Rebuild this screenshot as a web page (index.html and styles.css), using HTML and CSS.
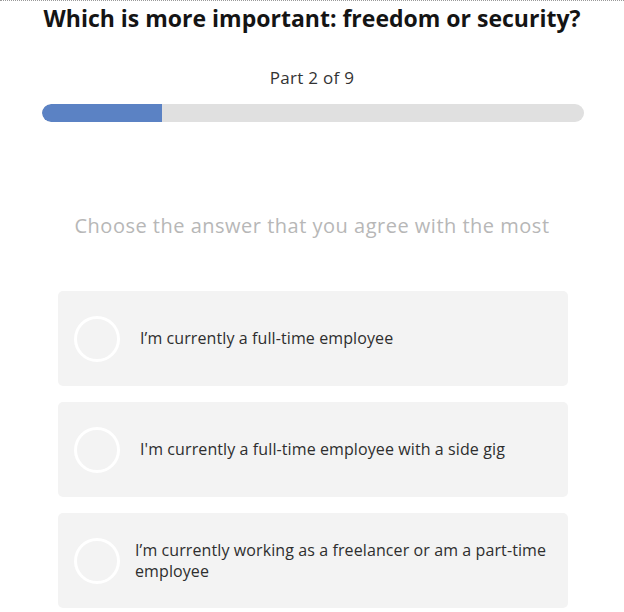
FILE: index.html
```html
<!DOCTYPE html>
<html lang="en">
<head>
<meta charset="utf-8">
<title>Quiz</title>
<link rel="stylesheet" href="styles.css">
</head>
<body>
<div class="page">
  <h1 class="title">Which is more important: freedom or security?</h1>
  <div class="part">Part 2 of 9</div>
  <div class="progress"><div class="progress-fill" style="width:22.2%"></div></div>
  <p class="prompt">Choose the answer that you agree with the most</p>
  <div class="options">
    <div class="option"><span class="radio"></span><span class="label">I’m currently a full-time employee</span></div>
    <div class="option"><span class="radio"></span><span class="label">I'm currently a full-time employee with a side gig</span></div>
    <div class="option option-tight"><span class="radio"></span><span class="label">I’m currently working as a freelancer or am a part-time employee</span></div>
  </div>
</div>
</body>
</html>
```

FILE: styles.css
```css
html, body {
  margin: 0;
  padding: 0;
  background: #ffffff;
}
body {
  font-family: "Open Sans", "Noto Sans", sans-serif;
  overflow: hidden;
}
.page {
  width: 624px;
  height: 612px;
  box-sizing: border-box;
  border-top: 1px dotted #9a9a9a;
  overflow: hidden;
}
.title {
  margin: 0;
  font-size: 23px;
  line-height: 34px;
  font-weight: 700;
  color: #141414;
  text-align: center;
}
.part {
  margin-top: 33px;
  font-size: 17px;
  line-height: 20px;
  letter-spacing: 0.3px;
  color: #333333;
  text-align: center;
}
.progress {
  margin: 16px 0 0 42px;
  width: 542px;
  height: 18px;
  border-radius: 9px;
  background: #e0e0e0;
  overflow: hidden;
}
.progress-fill {
  height: 100%;
  background: #5b82c4;
  border-radius: 9px 0 0 9px;
}
.prompt {
  margin: 91px 0 0;
  font-size: 20px;
  line-height: 26px;
  letter-spacing: 0.5px;
  color: #b7b7b7;
  text-align: center;
}
.options {
  margin: 52px 0 0 58px;
  width: 510px;
  display: flex;
  flex-direction: column;
  gap: 16px;
}
.option {
  height: 95px;
  flex: none;
  box-sizing: border-box;
  display: flex;
  align-items: center;
  gap: 20px;
  padding: 0 16px;
  background: #f3f3f3;
  border-radius: 5px;
}
.option-tight {
  gap: 15px;
}
.radio {
  flex: none;
  width: 46px;
  height: 46px;
  box-sizing: border-box;
  border: 3px solid #ffffff;
  border-radius: 50%;
}
.label {
  font-size: 16px;
  line-height: 21px;
  letter-spacing: 0.1px;
  color: #2e2e2e;
}
```
